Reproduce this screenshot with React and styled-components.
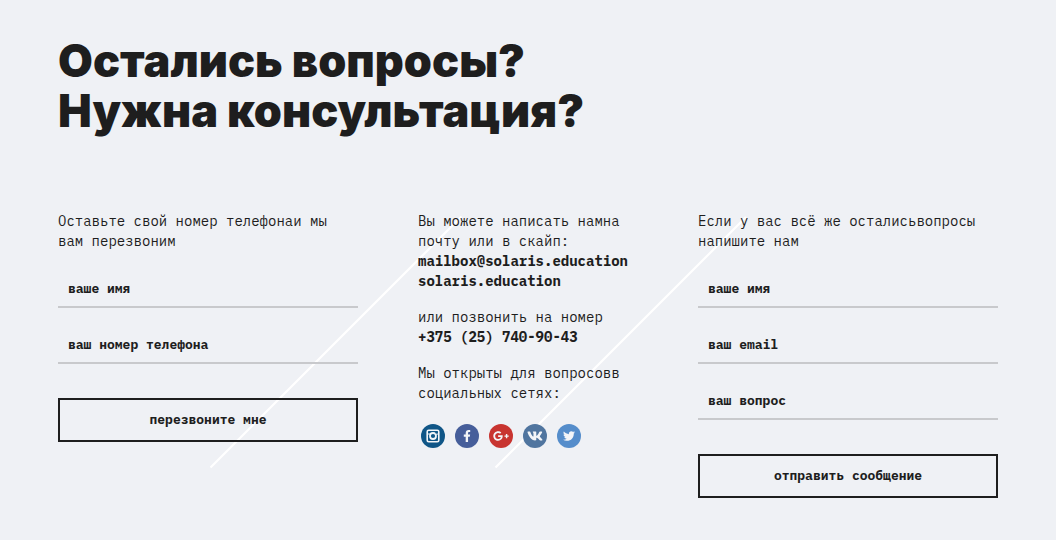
import React from 'react';
import styled, { createGlobalStyle } from 'styled-components';
import { FaFacebookF, FaGooglePlusG, FaTwitter, FaVk } from 'react-icons/fa';

const ink = '#1e1e1e';
const mono = '"IBM Plex Mono", "Liberation Mono", monospace';

const GlobalStyle = createGlobalStyle`
  *, *::before, *::after { box-sizing: border-box; }
  body { margin: 0; background: #eff1f5; color: ${ink}; font: 14px/20px ${mono}; }
`;

const Section = styled.section`
  position: relative;
  z-index: 0;
  padding: 36px 58px 42px;
`;

const Title = styled.h2`
  margin: 0 0 75px;
  font: 900 45px/50px Inter, "Open Sans", sans-serif;
`;

const TitleLine = styled.span`
  display: block;
`;

const Columns = styled.div`
  display: grid;
  grid-template-columns: 15fr 11fr 15fr;
  gap: 60px;
  align-items: start;
`;

const Form = styled.form`
  display: flex;
  flex-direction: column;
  gap: 20px;
`;

const Contacts = styled.div`
  position: relative;
  display: flex;
  flex-direction: column;
  gap: 16px;
`;

const Text = styled.p`
  margin: 0;
`;

const Intro = styled(Text)`
  padding-bottom: 1px;
`;

const ContactLink = styled.a`
  display: block;
  color: inherit;
  font-weight: 700;
  text-decoration: none;
`;

const Field = styled.input`
  width: 100%;
  height: 36px;
  padding: 0 10px 2px;
  border: 0;
  border-bottom: 2px solid #c8c9cc;
  border-radius: 0;
  background: transparent;
  color: ${ink};
  font: 700 13px/20px ${mono};
  &::placeholder { color: ${ink}; opacity: 1; }
`;

const Submit = styled.button`
  height: 44px;
  margin-top: 14px;
  border: 2px solid ${ink};
  background: transparent;
  color: ${ink};
  font: 700 13px/20px ${mono};
  cursor: pointer;
`;

const Socials = styled.nav`
  display: flex;
  gap: 10px;
  padding: 5px 3px 0;
`;

const Social = styled.a`
  display: flex;
  align-items: center;
  justify-content: center;
  width: 24px;
  height: 24px;
  border-radius: 50%;
  background: ${(p) => p.$color};
  color: #f3f5f8;
`;

const Strokes = styled.svg`
  position: absolute;
  z-index: -1;
  top: 5px;
  left: -208px;
  pointer-events: none;
`;

const InstagramIcon = () => (
  <svg width="14" height="14" viewBox="0 0 14 14" fill="none" aria-hidden="true">
    <rect x="1.2" y="1.2" width="11.6" height="11.6" rx="1.5" stroke="currentColor" strokeWidth="1.6" />
    <path d="M1.5 5h3M9.5 5h3" stroke="currentColor" strokeWidth="1" />
    <circle cx="7" cy="7" r="3" stroke="currentColor" strokeWidth="1.8" />
    <rect x="9.5" y="2.5" width="2" height="2" fill="#105687" />
  </svg>
);

const socials = [
  { name: 'Instagram', color: '#105687', icon: <InstagramIcon /> },
  { name: 'Facebook', color: '#465e9a', icon: <FaFacebookF size={12} /> },
  { name: 'Google+', color: '#c83430', icon: <FaGooglePlusG size={16} /> },
  { name: 'VK', color: '#50759f', icon: <FaVk size={16} /> },
  { name: 'Twitter', color: '#558dcb', icon: <FaTwitter size={12} /> },
];

const RequestForm = ({ intro, fields, action }) => (
  <Form onSubmit={(e) => e.preventDefault()}>
    <Intro>{intro}</Intro>
    {fields.map(({ label, type }) => (
      <Field key={label} type={type} placeholder={label} aria-label={label} />
    ))}
    <Submit type="submit">{action}</Submit>
  </Form>
);

export default function App() {
  return (
    <>
      <GlobalStyle />
      <Section>
        <Title>
          <TitleLine>Остались вопросы?</TitleLine>
          <TitleLine>Нужна консультация?</TitleLine>
        </Title>
        <Columns>
          <RequestForm
            intro="Оставьте свой номер телефонаи мы вам перезвоним"
            fields={[
              { label: 'ваше имя', type: 'text' },
              { label: 'ваш номер телефона', type: 'tel' },
            ]}
            action="перезвоните мне"
          />
          <Contacts>
            <Strokes width="537" height="253" viewBox="0 0 537 253" aria-hidden="true">
              <path d="M0.5 251.5 251.5 0.5M285.5 251.5 536 1" stroke="#fff" strokeWidth="2.2" />
            </Strokes>
            <Text as="div">
              Вы можете написать намна почту или в скайп:
              <ContactLink href="mailto:mailbox@solaris.education">mailbox@solaris.education</ContactLink>
              <ContactLink href="skype:solaris.education">solaris.education</ContactLink>
            </Text>
            <Text as="div">
              или позвонить на номер
              <ContactLink href="tel:+375257409043">+375 (25) 740-90-43</ContactLink>
            </Text>
            <Text>Мы открыты для вопросовв социальных сетях:</Text>
            <Socials aria-label="Социальные сети">
              {socials.map(({ name, color, icon }) => (
                <Social key={name} href="#" aria-label={name} $color={color}>
                  {icon}
                </Social>
              ))}
            </Socials>
          </Contacts>
          <RequestForm
            intro="Если у вас всё же осталисьвопросы напишите нам"
            fields={[
              { label: 'ваше имя', type: 'text' },
              { label: 'ваш email', type: 'email' },
              { label: 'ваш вопрос', type: 'text' },
            ]}
            action="отправить сообщение"
          />
        </Columns>
      </Section>
    </>
  );
}
